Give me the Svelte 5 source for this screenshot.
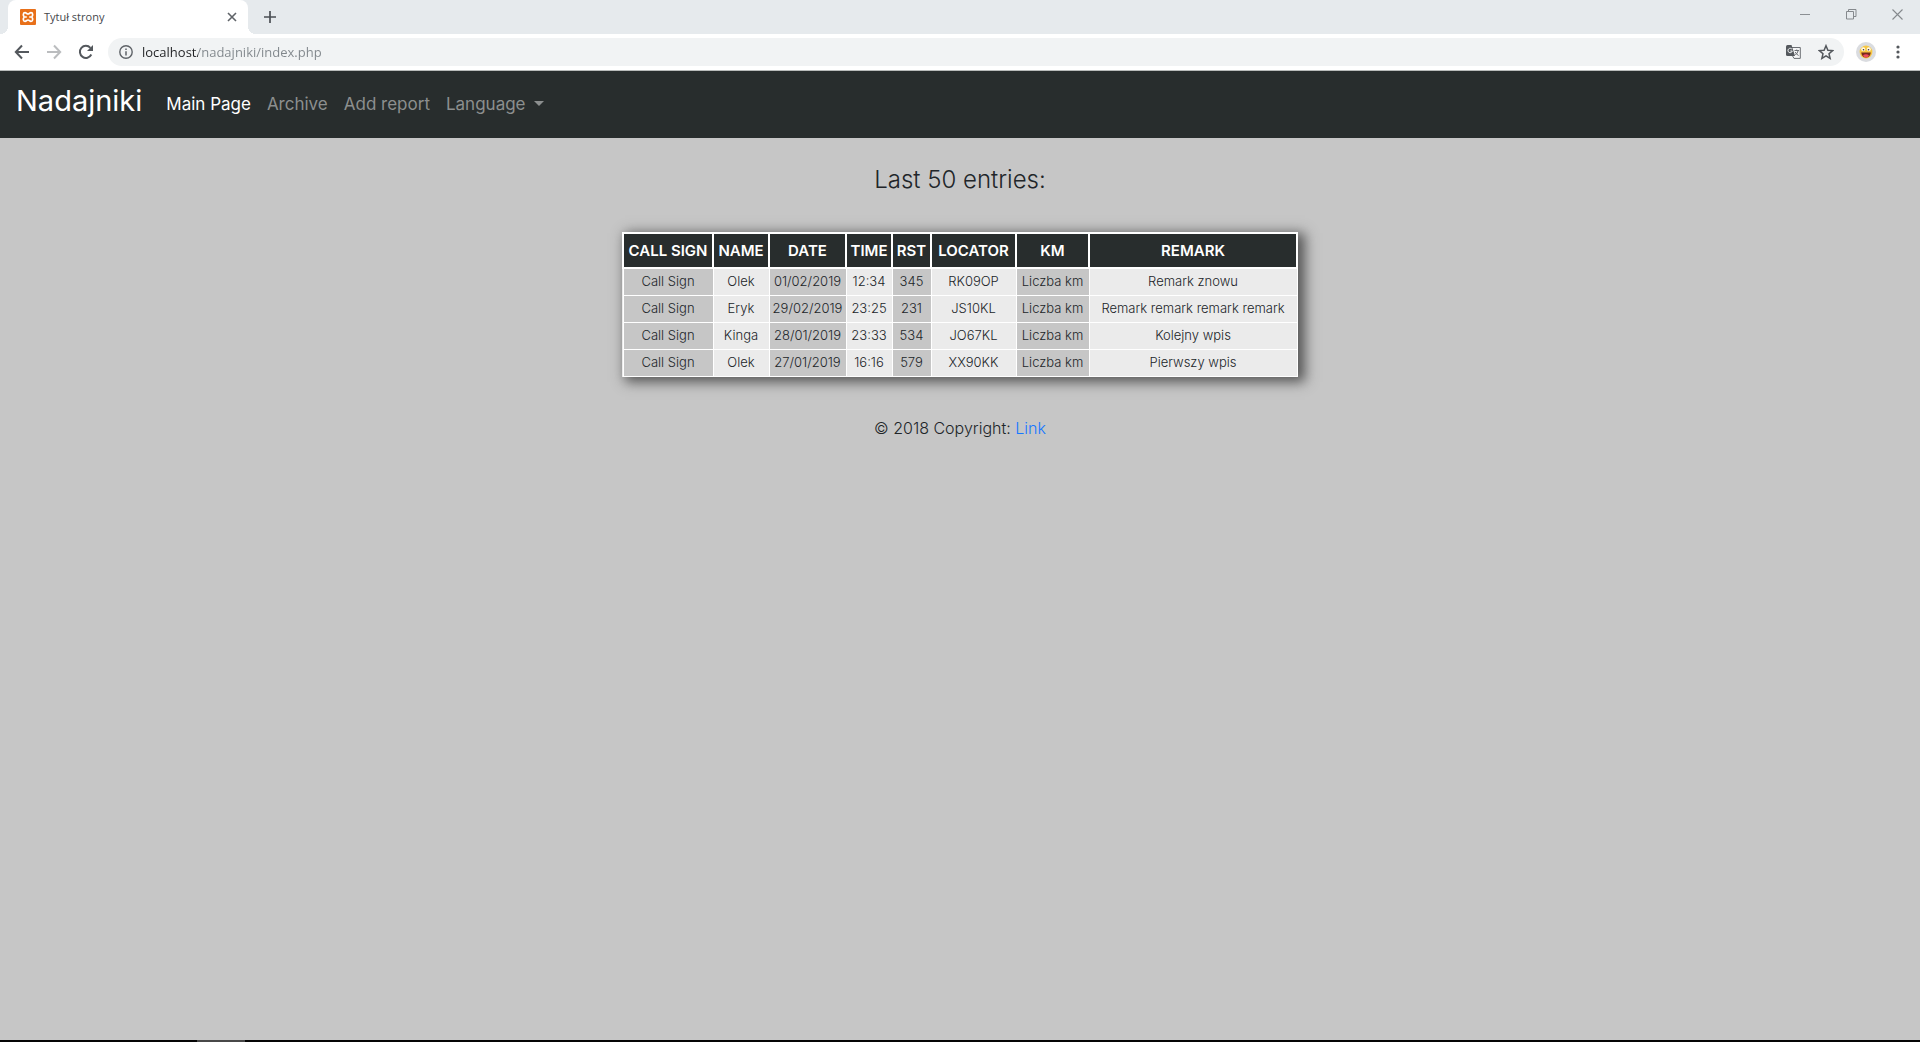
<script>
  const columns = ['CALL SIGN', 'NAME', 'DATE', 'TIME', 'RST', 'LOCATOR', 'KM', 'REMARK'];
  const rows = [
    ['Call Sign', 'Olek', '01/02/2019', '12:34', '345', 'RK09OP', 'Liczba km', 'Remark znowu'],
    ['Call Sign', 'Eryk', '29/02/2019', '23:25', '231', 'JS10KL', 'Liczba km', 'Remark remark remark remark'],
    ['Call Sign', 'Kinga', '28/01/2019', '23:33', '534', 'JO67KL', 'Liczba km', 'Kolejny wpis'],
    ['Call Sign', 'Olek', '27/01/2019', '16:16', '579', 'XX90KK', 'Liczba km', 'Pierwszy wpis']
  ];
  const shaded = [0, 2, 4, 6];
  let address = $state('localhost/nadajniki/index.php');
</script>

<div class="window">
  <div class="tabstrip">
    <div class="tab">
      <svg class="favicon" viewBox="0 0 16 16" aria-hidden="true">
        <rect width="16" height="16" rx="1" fill="#e8701a" />
        <path d="M5 3.600C3 3.600 2.800 6.500 4.300 8 2.800 9.500 3 12.400 5 12.400 6.500 12.400 6.600 11 8 11 9.400 11 9.500 12.400 11 12.400 13 12.400 13.200 9.500 11.700 8 13.200 6.500 13 3.600 11 3.600 9.500 3.600 9.400 5 8 5 6.600 5 6.500 3.600 5 3.600Z" fill="none" stroke="#fff" stroke-width="1.700" />
        <path d="M5 8H6.800M9.200 8H11" stroke="#fff" stroke-width="1.400" />
      </svg>
      <span class="tab-title">Tytuł strony</span>
      <button class="tab-close" aria-label="Close tab">
        <svg width="10" height="10" viewBox="0 0 10 10"><path d="M1 1L9 9M9 1L1 9" stroke="#5f6368" stroke-width="1.6" /></svg>
      </button>
    </div>
    <button class="new-tab" aria-label="New tab">
      <svg width="12" height="12" viewBox="0 0 12 12"><path d="M6 0V12M0 6H12" stroke="#4b4f54" stroke-width="1.7" /></svg>
    </button>
    <div class="controls">
      <button aria-label="Minimize"><svg width="11" height="11" viewBox="0 0 11 11"><path d="M0 5.500H10" stroke="#8b8f93" /></svg></button>
      <button aria-label="Restore"><svg width="11" height="11" viewBox="0 0 11 11"><path d="M.5 2.500H7.500V10H.5ZM2.500 2.500V.5H10V7.500H7.500" fill="none" stroke="#85898d" /></svg></button>
      <button aria-label="Close"><svg width="11" height="11" viewBox="0 0 11 11"><path d="M.5.5L10.500 10.500M10.500.5L.5 10.500" stroke="#85898d" stroke-width="1.100" /></svg></button>
    </div>
  </div>

  <div class="toolbar">
    <div class="history">
      <button aria-label="Back"><svg width="16" height="16" viewBox="0 0 16 16"><path d="M15 8H2M8 1.500L1.800 8L8 14.500" fill="none" stroke="#54585d" stroke-width="2" /></svg></button>
      <button aria-label="Forward"><svg width="16" height="16" viewBox="0 0 16 16"><path d="M1 8H14M8 1.500L14.200 8L8 14.500" fill="none" stroke="#bbbdbf" stroke-width="2" /></svg></button>
      <button aria-label="Reload"><svg width="16" height="16" viewBox="0 0 16 16"><path d="M13.300 10.500A6 6 0 1 1 12.400 3.900" fill="none" stroke="#54585d" stroke-width="2" /><path d="M15 1V7H9Z" fill="#54585d" /></svg></button>
    </div>
    <div class="omnibox">
      <svg width="14" height="14" viewBox="0 0 14 14" aria-hidden="true"><circle cx="7" cy="7" r="6.200" fill="none" stroke="#5f6368" stroke-width="1.400" /><path d="M7 6.200V10.500M7 3.500V5" stroke="#5f6368" stroke-width="1.500" /></svg>
      <input class="address" type="text" aria-label="Address" bind:value={address} />
      <button aria-label="Translate this page">
        <svg width="15" height="14" viewBox="0 0 15 14"><path d="M6 2.500H14.300V13.400H8L6 10" fill="#f4f5f6" stroke="#6b6f74" /><path d="M0 1.500Q0 0 1.500 0H5.500L9 11H1.500Q0 11 0 9.500Z" fill="#54585d" /><path d="M6 4.300A2.200 2.200 0 1 0 6.300 6H4.300" fill="none" stroke="#f1f3f4" /><path d="M8.500 5.500H13M10.700 4.500V5.500M12.200 5.500Q11.500 8.500 9.300 10M9.200 7Q10.500 9.500 12.600 10.500" fill="none" stroke="#6b6f74" /></svg>
      </button>
      <button aria-label="Bookmark this page">
        <svg width="16" height="16" viewBox="0 0 16 16"><path d="M8 1.700L9.900 6.200L14.600 6.600L11 9.700L12.100 14.300L8 11.800L3.900 14.300L5 9.700L1.400 6.600L6.100 6.200Z" fill="none" stroke="#54585d" stroke-width="1.500" /></svg>
      </button>
    </div>
    <button class="profile" aria-label="Profile">
      <svg width="20" height="20" viewBox="0 0 20 20"><circle cx="10" cy="10" r="10" fill="#dadce0" /><circle cx="10" cy="10" r="6.400" fill="#f7c844" /><circle cx="7.200" cy="7.300" r="2" fill="#fff8e5" /><circle cx="12.800" cy="7.300" r="2" fill="#fff8e5" /><circle cx="7.500" cy="7.800" r=".8" fill="#473525" /><circle cx="12.500" cy="7.800" r=".8" fill="#473525" /><path d="M5.200 10.500H14.800Q14 15.500 10 15.500Q6 15.500 5.200 10.500Z" fill="#782a1d" /><path d="M7 13.200Q10 11.500 13 13.200Q12 15.500 10 15.500Q8 15.500 7 13.200Z" fill="#ef4d5d" /></svg>
    </button>
    <button class="more" aria-label="Menu">
      <svg width="4" height="14" viewBox="0 0 4 14"><g fill="#54585d"><circle cx="2" cy="2" r="1.600" /><circle cx="2" cy="7" r="1.600" /><circle cx="2" cy="12" r="1.600" /></g></svg>
    </button>
  </div>

  <nav class="navbar">
    <a class="brand" href="#home">Nadajniki</a>
    <a class="link active" href="#main">Main Page</a>
    <a class="link" href="#archive">Archive</a>
    <a class="link" href="#add">Add report</a>
    <button class="link language" aria-haspopup="true">Language<span class="caret"></span></button>
  </nav>

  <main>
    <h1>Last 50 entries:</h1>
    <table>
      <colgroup>
        {#each columns as column}
          <col class={column.toLowerCase().replace(' ', '-')} />
        {/each}
      </colgroup>
      <thead>
        <tr>{#each columns as column}<th scope="col">{column}</th>{/each}</tr>
      </thead>
      <tbody>
        {#each rows as row}
          <tr>{#each row as cell, i}<td class:shaded={shaded.includes(i)}>{cell}</td>{/each}</tr>
        {/each}
      </tbody>
    </table>
    <footer>© 2018 Copyright: <a href="#link">Link</a></footer>
  </main>
  <div class="taskbar"><span></span></div>
</div>

<style>
  :global(body) { margin: 0; }
  * { box-sizing: border-box; }
  .window {
    display: flex;
    flex-direction: column;
    min-height: 100vh;
    background: #c6c6c6;
    color: #212529;
    font-family: Inter, "Open Sans", sans-serif;
    font-size: 16px;
  }
  button {
    display: flex;
    align-items: center;
    justify-content: center;
    padding: 0;
    border: 0;
    background: none;
    font: inherit;
    color: inherit;
  }
  a { text-decoration: none; }
  svg { display: block; flex: none; }

  .tabstrip {
    display: flex;
    height: 34px;
    padding-left: 8px;
    background: #e6eaed;
    font-family: "Open Sans", sans-serif;
  }
  .tab {
    position: relative;
    display: flex;
    align-items: center;
    width: 240px;
    padding: 0 11px 0 12px;
    border-radius: 8px 8px 0 0;
    background: #fff;
  }
  .tab::before, .tab::after {
    content: "";
    position: absolute;
    bottom: 0;
    width: 8px;
    height: 8px;
  }
  .tab::before { left: -8px; background: radial-gradient(circle at 0 0, transparent 8px, #fff 8px); }
  .tab::after { right: -8px; background: radial-gradient(circle at 100% 0, transparent 8px, #fff 8px); }
  .favicon { width: 16px; height: 16px; }
  .tab-title { flex: 1; margin-left: 8px; padding-bottom: 2px; font-size: 11px; color: #45484c; }
  .new-tab { width: 28px; margin-left: 8px; }
  .controls { display: flex; margin-left: auto; height: 28px; }
  .controls button { width: 46px; }

  .toolbar {
    display: flex;
    align-items: center;
    height: 37px;
    padding: 0 12px 0 14px;
    border-bottom: 1px solid #b8bbba;
    background: #fff;
    font-family: "Open Sans", sans-serif;
  }
  .history { display: flex; gap: 16px; }
  .omnibox {
    display: flex;
    align-items: center;
    flex: 1;
    height: 28px;
    margin-left: 14px;
    padding: 0 10px 0 11px;
    border-radius: 14px;
    background: #f1f3f4;
    gap: 17px;
  }
  .address {
    flex: 1;
    min-width: 0;
    margin-left: -8px;
    padding: 0;
    border: 0;
    outline: 0;
    font: 13px/20px "Open Sans", sans-serif;
    color: transparent;
    background: linear-gradient(90deg, #202124 56px, #80868b 56px);
    background-clip: text;
  }
  .profile { margin-left: 12px; }
  .more { width: 20px; margin-left: 12px; }

  .navbar {
    display: flex;
    align-items: center;
    height: 67px;
    padding: 0 16px;
    gap: 16px;
    background: #282d2d;
  }
  .brand { margin-right: 8px; padding-bottom: 8px; font-size: 29px; line-height: 36px; color: #fff; }
  .link { padding-bottom: 2px; font-size: 17px; line-height: 24px; color: #8c8f8f; }
  .active { color: #fff; }
  .caret {
    margin-left: 8px;
    border: 5px solid transparent;
    border-top-color: #8c8f8f;
    border-bottom: 0;
  }

  main {
    display: flex;
    flex: 1;
    flex-direction: column;
    align-items: center;
    padding-top: 26px;
  }
  h1 { margin: 0; font-size: 24px; font-weight: 300; line-height: 32px; }
  table {
    width: 676px;
    max-width: 100%;
    margin-top: 36px;
    table-layout: fixed;
    border-collapse: collapse;
    background: #ebebeb;
    box-shadow: 5px 3px 12px 2px #555;
    text-align: center;
    white-space: nowrap;
  }
  .call-sign { width: 90px; }
  .name { width: 56px; }
  .date { width: 77px; }
  .time { width: 46px; }
  .rst { width: 39px; }
  .locator { width: 85px; }
  .km { width: 73px; }
  .remark { width: 208px; }
  th {
    height: 35px;
    padding: 0;
    border: 2px solid #fff;
    background: #282d2d;
    color: #fff;
    font-size: 15px;
    font-weight: 600;
  }
  td {
    height: 27px;
    padding: 0 0 2px;
    border: 1px solid #fff;
    font-size: 13px;
    font-weight: 300;
    line-height: 20px;
  }
  .shaded { background: #c6c6c6; }
  footer { margin-top: 39px; font-weight: 300; line-height: 24px; }
  footer a { color: #1677ff; }
  .taskbar { height: 2px; padding-left: 197px; background: #050505; }
  .taskbar span { display: block; width: 48px; height: 2px; background: #484848; }
</style>
